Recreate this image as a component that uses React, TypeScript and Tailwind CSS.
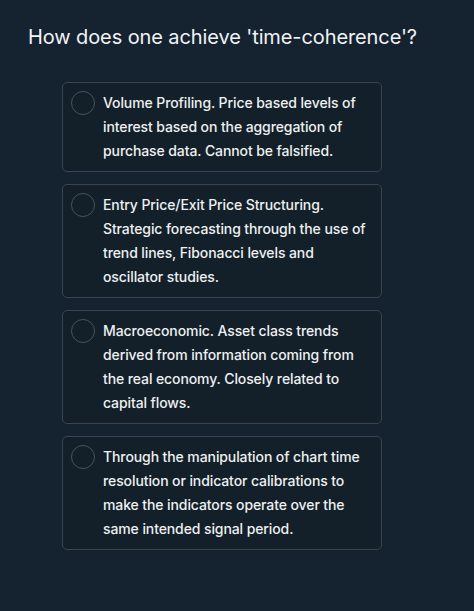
import React from "react";

const options = [
  "Volume Profiling. Price based levels of interest based on the aggregation of purchase data. Cannot be falsified.",
  "Entry Price/Exit Price Structuring. Strategic forecasting through the use of trend lines, Fibonacci levels and oscillator studies.",
  "Macroeconomic. Asset class trends derived from information coming from the real economy. Closely related to capital flows.",
  "Through the manipulation of chart time resolution or indicator calibrations to make the indicators operate over the same intended signal period.",
];

export default function App() {
  return (
    <div
      className="w-[474px] h-[611px] bg-[#152230] pt-[24px] pl-[28px]"
      style={{ fontFamily: "Inter, 'Noto Sans', sans-serif" }}
    >
      <h1 className="text-[20px] leading-[26px] tracking-[-0.1px] text-[#f1f3f5] font-normal">
        How does one achieve 'time-coherence'?
      </h1>
      <div className="mt-[32px] ml-[34px] w-[320px] flex flex-col gap-[12px]">
        {options.map((o, i) => (
          <div
            key={i}
            className="flex gap-[8px] rounded-[5px] border border-[#38454f] bg-[#132029] pl-[8px] pr-[10px] py-[8px]"
          >
            <div className="w-[24px] h-[24px] shrink-0 rounded-full border border-[#46525c]" />
            <p className="text-[14px] leading-[24px] tracking-[-0.1px] font-medium text-[#eef0f2]">
              {o}
            </p>
          </div>
        ))}
      </div>
    </div>
  );
}
